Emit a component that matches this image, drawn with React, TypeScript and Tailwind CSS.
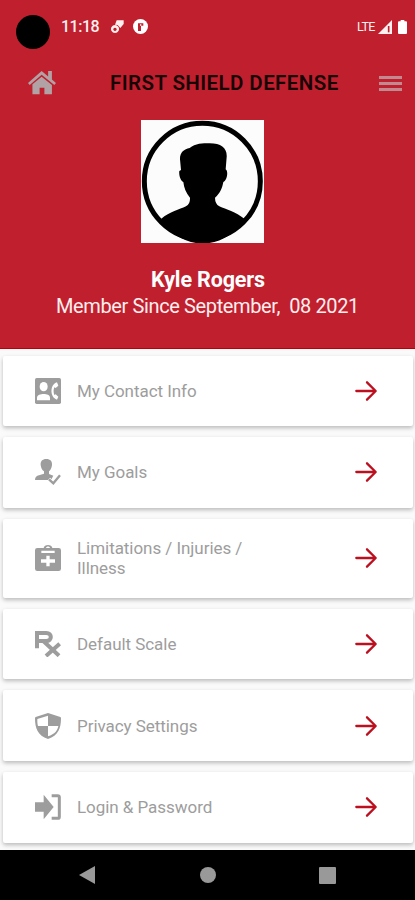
import type { ReactNode } from "react";

type MenuItem = {
  label: string;
  icon: ReactNode;
  className: string;
};

/* Menu icons share a 78x78 grid and inherit the row's grey. */
function MenuIcon({ children }: { children: ReactNode }) {
  return (
    <svg viewBox="0 0 78 78" className="h-[26px] w-[26px] shrink-0" fill="currentColor">
      {children}
    </svg>
  );
}

const ContactIcon = (
  <MenuIcon>
    <rect width="78" height="78" rx="5" />
    <ellipse cx="26" cy="26" rx="12" ry="14" fill="#fff" />
    <path d="M6 67V60C6 50 17 48 26 48s19 2 19 12v7z" fill="#fff" />
    <path
      d="M66 13C44 19 44 59 66 65l4-9-8-7-4 2c-3-7-3-16 0-23l4 2 8-7z"
      fill="#fff"
    />
  </MenuIcon>
);

const GoalsIcon = (
  <MenuIcon>
    <path d="M34 0c12 0 18 7 17 18-1 9-4 15-9 19v8l13 5-7 13H0c0-9 5-12 12-14l15-5v-7c-6-4-9-10-10-19C16 7 22 0 34 0z" />
    <path d="M41 61l14 13 23-27" fill="none" stroke="#fff" strokeWidth="12" />
    <path d="M42 61l13 12 20-24" fill="none" stroke="currentColor" strokeWidth="7" />
  </MenuIcon>
);

const InjuryIcon = (
  <MenuIcon>
    <path
      fillRule="evenodd"
      d="M7 9h19C27-3 51-3 52 9h19q7 0 7 7v55q0 7-7 7H7q-7 0-7-7V16q0-7 7-7zM33 9h12C44 3 34 3 33 9zM19 17v7h40v-7zM34 32v11H18v10h16v11h10V53h16V43H44V32z"
    />
  </MenuIcon>
);

const ScaleIcon = (
  <MenuIcon>
    <path d="M6 52V6h28c18 0 18 24 0 24H6" fill="none" stroke="currentColor" strokeWidth="12" />
    <path d="M24 29l48 45M74 38L33 75" fill="none" stroke="currentColor" strokeWidth="12" />
  </MenuIcon>
);

const PrivacyIcon = (
  <MenuIcon>
    <path
      fillRule="evenodd"
      d="M39 0l37 12q2 1 2 4c0 30-8 52-39 62C8 68 0 46 0 16q0-3 2-4zM39 8L7 18c0 8 0 14 2 21h30zM39 39v31c21-7 29-18 31-31z"
    />
  </MenuIcon>
);

const LoginIcon = (
  <MenuIcon>
    <path d="M0 25h26V2l30 37-30 37V53H0z" />
    <path d="M50 5h18q5 0 5 5v58q0 5-5 5H50" fill="none" stroke="currentColor" strokeWidth="9" />
  </MenuIcon>
);

const ITEMS: MenuItem[] = [
  { label: "My Contact Info", icon: ContactIcon, className: "h-[70px]" },
  { label: "My Goals", icon: GoalsIcon, className: "h-[70.5px]" },
  { label: "Limitations / Injuries / Illness", icon: InjuryIcon, className: "h-[79.5px]" },
  { label: "Default Scale", icon: ScaleIcon, className: "h-[70px]" },
  { label: "Privacy Settings", icon: PrivacyIcon, className: "h-[71px]" },
  { label: "Login & Password", icon: LoginIcon, className: "h-[70.5px]" },
];

function StatusBar() {
  return (
    <div className="flex h-[58px] items-start pl-4 text-[#fff0f0]">
      <div className="mt-[15px] h-[34px] w-[34px] rounded-full bg-black" />
      <span className="mt-[17px] ml-[11px] w-[41px] text-[16px] leading-5 font-medium tracking-[-0.5px]">
        11:18
      </span>
      <svg viewBox="0 0 40 42" className="mt-5 ml-2 h-[14px] w-[14px]" fill="currentColor">
        <path
          fillRule="evenodd"
          d="M14 15a12 12 0 1 0 .1 0zM14 23a5 5 0 1 1-.1 0z"
        />
        <path d="M19 1h21v11L30 24l-8-9-8-1z" />
      </svg>
      <svg viewBox="0 0 45 45" className="mt-[19px] ml-[9px] h-[15px] w-[15px]">
        <circle cx="22.500" cy="22.500" r="22.500" fill="#fff" />
        <path d="M15 36V13h16v7h-7v16z" fill="#c01f2e" />
        <path d="M21 18h4" stroke="#fff" strokeWidth="4" />
      </svg>
      <span className="mt-[17px] ml-[209px] w-[20px] text-[12.500px] leading-5 tracking-[-0.6px]">
        LTE
      </span>
      <svg viewBox="0 0 42 42" className="mt-5 ml-[1px] h-[14px] w-[14px]">
        <path d="M0 42L42 0v42z" fill="currentColor" />
        <path d="M32 18v19" stroke="#c01f2e" strokeWidth="5" />
      </svg>
      <svg viewBox="0 0 27 42" className="mt-5 ml-[6px] h-[14px] w-[9px]" fill="#fff">
        <path d="M8 0h11v4h5q3 0 3 3v32q0 3-3 3H3q-3 0-3-3V7q0-3 3-3h5z" />
      </svg>
    </div>
  );
}

function Header() {
  return (
    <div className="flex h-[50px] items-center pl-7">
      <svg viewBox="0 0 82 70" className="h-6 w-7" fill="#b1a3a5">
        <path d="M40 0L0 35l5 6L40 11l37 30 5-6-12-10V0H59v16z" />
        <path d="M40 17L13 39v29h21V49h14v19h22V41z" />
      </svg>
      <h1 className="ml-[54px] w-[231px] text-[20.500px] leading-6 font-semibold tracking-[0.42px] whitespace-nowrap text-[#180407]">
        FIRST SHIELD DEFENSE
      </h1>
      <div className="ml-[38px] flex w-[23px] flex-col gap-[3px]">
        <span className="h-[3px] bg-[#c18990]" />
        <span className="h-[3px] bg-[#c18990]" />
        <span className="h-[3px] bg-[#c18990]" />
      </div>
    </div>
  );
}

function Avatar() {
  return (
    <svg viewBox="0 0 369 369" className="mx-auto mt-3 h-[123px] w-[123px] -translate-x-[5px] bg-[#fcfcfc]">
      <circle cx="184" cy="184" r="174" fill="none" stroke="#000" strokeWidth="15" />
      <path d="M60 297c27-23 55-28 75-38q13-6 12-26c-12-14-18-30-20-47-8-3-14-20-12-33l5-3-3-32c-1-20 12-31 29-34 17-14 39-14 60-14 35 0 53 15 51 41l-3 37c9 5 4 34-7 38-3 17-9 33-25 47q0 18 13 26c21 10 48 16 76 38-65 100-191 96-251 0z" />
    </svg>
  );
}

function MenuRow({ item }: { item: MenuItem }) {
  return (
    <div
      className={`flex items-center rounded-[2px] bg-white pl-8 text-[#9d9d9d] shadow-[0_2px_4px_rgba(0,0,0,0.26)] ${item.className}`}
    >
      {item.icon}
      <span className="ml-4 w-[190px] text-[17px] leading-5 tracking-[-0.05px]">
        {item.label}
      </span>
      <svg
        viewBox="0 0 66 60"
        className="ml-[88px] h-5 w-[22px] overflow-visible"
        fill="none"
        stroke="#bc1020"
        strokeWidth="7"
        strokeLinecap="round"
        strokeLinejoin="round"
      >
        <path d="M4 30h57M36 4l26 26-26 26" />
      </svg>
    </div>
  );
}

function NavBar() {
  return (
    <div className="flex h-[50px] items-center bg-black pl-[79px]">
      <svg viewBox="0 0 16 18" className="h-[18px] w-4" fill="#999">
        <path d="M0 9L16 0v18z" />
      </svg>
      <div className="ml-[105px] h-4 w-4 rounded-full bg-[#999]" />
      <div className="ml-[103px] h-[17px] w-[17px] rounded-[1px] bg-[#999]" />
    </div>
  );
}

export default function App() {
  return (
    <div className="flex h-[900px] w-[415px] flex-col overflow-hidden bg-[#fafafa] font-['Roboto',sans-serif]">
      <header className="h-[349px] shrink-0 border-b border-[#b80008] bg-[#c01f2e]">
        <StatusBar />
        <Header />
        <Avatar />
        <div className="mt-6 text-center text-white">
          <div className="pl-px text-[21.500px] leading-[26px] font-bold tracking-[-0.15px]">
            Kyle Rogers
          </div>
          <div className="text-[20px] leading-[26px] tracking-[-0.38px] whitespace-pre text-[#ffeeee]">
            Member Since September,  08 2021
          </div>
        </div>
      </header>
      <main className="flex h-[501px] shrink-0 flex-col gap-[11px] pt-[7px] pr-0.5 pl-[3px]">
        {ITEMS.map((item) => (
          <MenuRow key={item.label} item={item} />
        ))}
      </main>
      <NavBar />
    </div>
  );
}
